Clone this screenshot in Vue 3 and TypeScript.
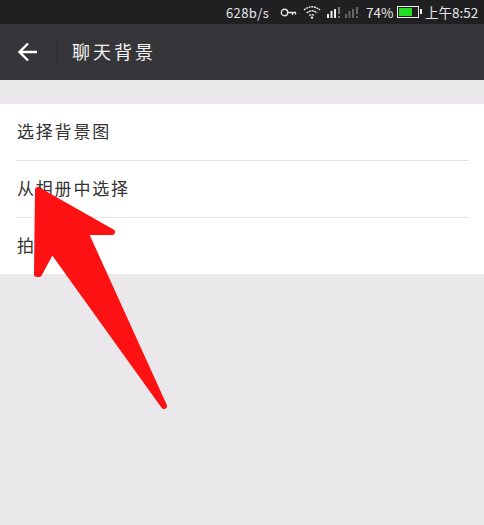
<script setup lang="ts">
const rows: string[] = ['选择背景图', '从相册中选择', '拍照']
</script>

<template>
  <div class="page">
    <div class="status">
      <span class="speed">628b/s</span>
      <svg class="key" width="17" height="9" viewBox="0 0 17 9">
        <circle cx="4.500" cy="4.500" r="3.200" fill="none" stroke="#e4e4e4" stroke-width="1.400" />
        <path d="M8 4.500h8M12.500 4.500v2.500M15.500 4.500v2" fill="none" stroke="#e4e4e4" stroke-width="1.400" />
      </svg>
      <svg class="wifi" width="18" height="14" viewBox="0 0 18 14">
        <path d="M1 5Q9-1.500 17 5M3.800 8Q9 3.600 14.200 8M6.400 10.600Q9 8.600 11.600 10.600" fill="none" stroke="#f0f0f0" stroke-width="1.400" stroke-dasharray="2 .7" />
        <circle cx="9" cy="12.600" r="1.200" fill="#f0f0f0" />
      </svg>
      <svg class="signal" width="16" height="13" viewBox="0 0 16 13">
        <path d="M1 8h2v4H1zM4.500 5h2v7h-2zM8 3h2v9H8z" fill="#f0f0f0" />
        <path d="M12 1h2v7h-2zM12 10h2v2h-2z" fill="#777" />
      </svg>
      <svg class="signal dim" width="16" height="13" viewBox="0 0 16 13">
        <path d="M1 8h2v4H1zM4.500 5h2v7h-2zM8 3h2v9H8zM12 1h2v7h-2zM12 10h2v2h-2z" fill="#666" />
      </svg>
      <span class="pct">74%</span>
      <div class="battery"><div class="level"></div></div>
      <span class="time">上午8:52</span>
    </div>
    <header class="nav">
      <svg class="back" width="22" height="22" viewBox="0 0 22 22">
        <path d="M20 11H3M11 2.500 2.500 11l8.500 8.500" fill="none" stroke="#fff" stroke-width="2.400" />
      </svg>
      <div class="divider"></div>
      <h1 class="title">聊天背景</h1>
    </header>
    <main class="content">
      <ul class="list">
        <li v-for="row in rows" :key="row" class="row">
          <span class="label">{{ row }}</span>
        </li>
      </ul>
    </main>
    <svg class="arrow" width="484" height="525" viewBox="0 0 484 525">
      <path
        d="M38 190 L112 232 L85 232 L164 406 L52 250 L39 274 L37 274 Z"
        fill="#fc1212"
        stroke="#fc1212"
        stroke-width="6"
        stroke-linejoin="round"
      />
    </svg>
  </div>
</template>

<style scoped>
.page {
  position: relative;
  width: 484px;
  height: 525px;
  overflow: hidden;
  background: #eae8eb;
  font-family: "Noto Sans CJK SC", "Liberation Sans", sans-serif;
  display: flex;
  flex-direction: column;
}
.status {
  height: 24px;
  background: #202023;
  color: #e6e6e6;
  display: flex;
  align-items: center;
  font-size: 13px;
  padding-left: 226px;
  box-sizing: border-box;
}
.speed { width: 50px; letter-spacing: 0.400px; }
.key { margin-left: 4px; }
.wifi { margin-left: 6px; }
.signal { margin-left: 5px; }
.signal.dim { margin-left: 2px; }
.pct { margin-left: 6px; width: 31px; font-size: 13.500px; }
.battery {
  width: 22px;
  height: 12px;
  margin-left: 0;
  border: 1.500px solid #f0f0f0;
  box-sizing: border-box;
  padding: 1px;
  position: relative;
}
.battery::after {
  content: "";
  position: absolute;
  right: -4px;
  top: 2px;
  width: 2px;
  height: 5px;
  background: #f0f0f0;
}
.level { width: 74%; height: 100%; background: #22dd22; }
.time { margin-left: 6px; white-space: nowrap; font-size: 13.500px; }
.nav {
  height: 56px;
  background: #36363a;
  display: flex;
  align-items: center;
  box-sizing: border-box;
}
.back { margin-left: 17px; }
.divider {
  width: 1px;
  height: 28px;
  background: #2d2d30;
  margin-left: 18px;
}
.title {
  margin: 0 0 3px 14px;
  color: #f4f4f4;
  font-size: 18px;
  font-weight: 400;
  letter-spacing: 3px;
  line-height: 1;
}
.content {
  flex: 1;
  padding-top: 24px;
}
.list {
  list-style: none;
  margin: 0;
  padding: 0 0 0 16px;
  background: #fff;
}
.row {
  height: 57px;
  display: flex;
  align-items: center;
  box-sizing: border-box;
  border-bottom: 1px solid #e4e4e6;
  margin-right: 15px;
}
.row:last-child { border-bottom: none; height: 56px; }
.label {
  font-size: 17px;
  letter-spacing: 1.800px;
  color: #333;
  margin: 0 0 4px 1px;
}
.arrow {
  position: absolute;
  left: 0;
  top: 0;
  pointer-events: none;
}
</style>
